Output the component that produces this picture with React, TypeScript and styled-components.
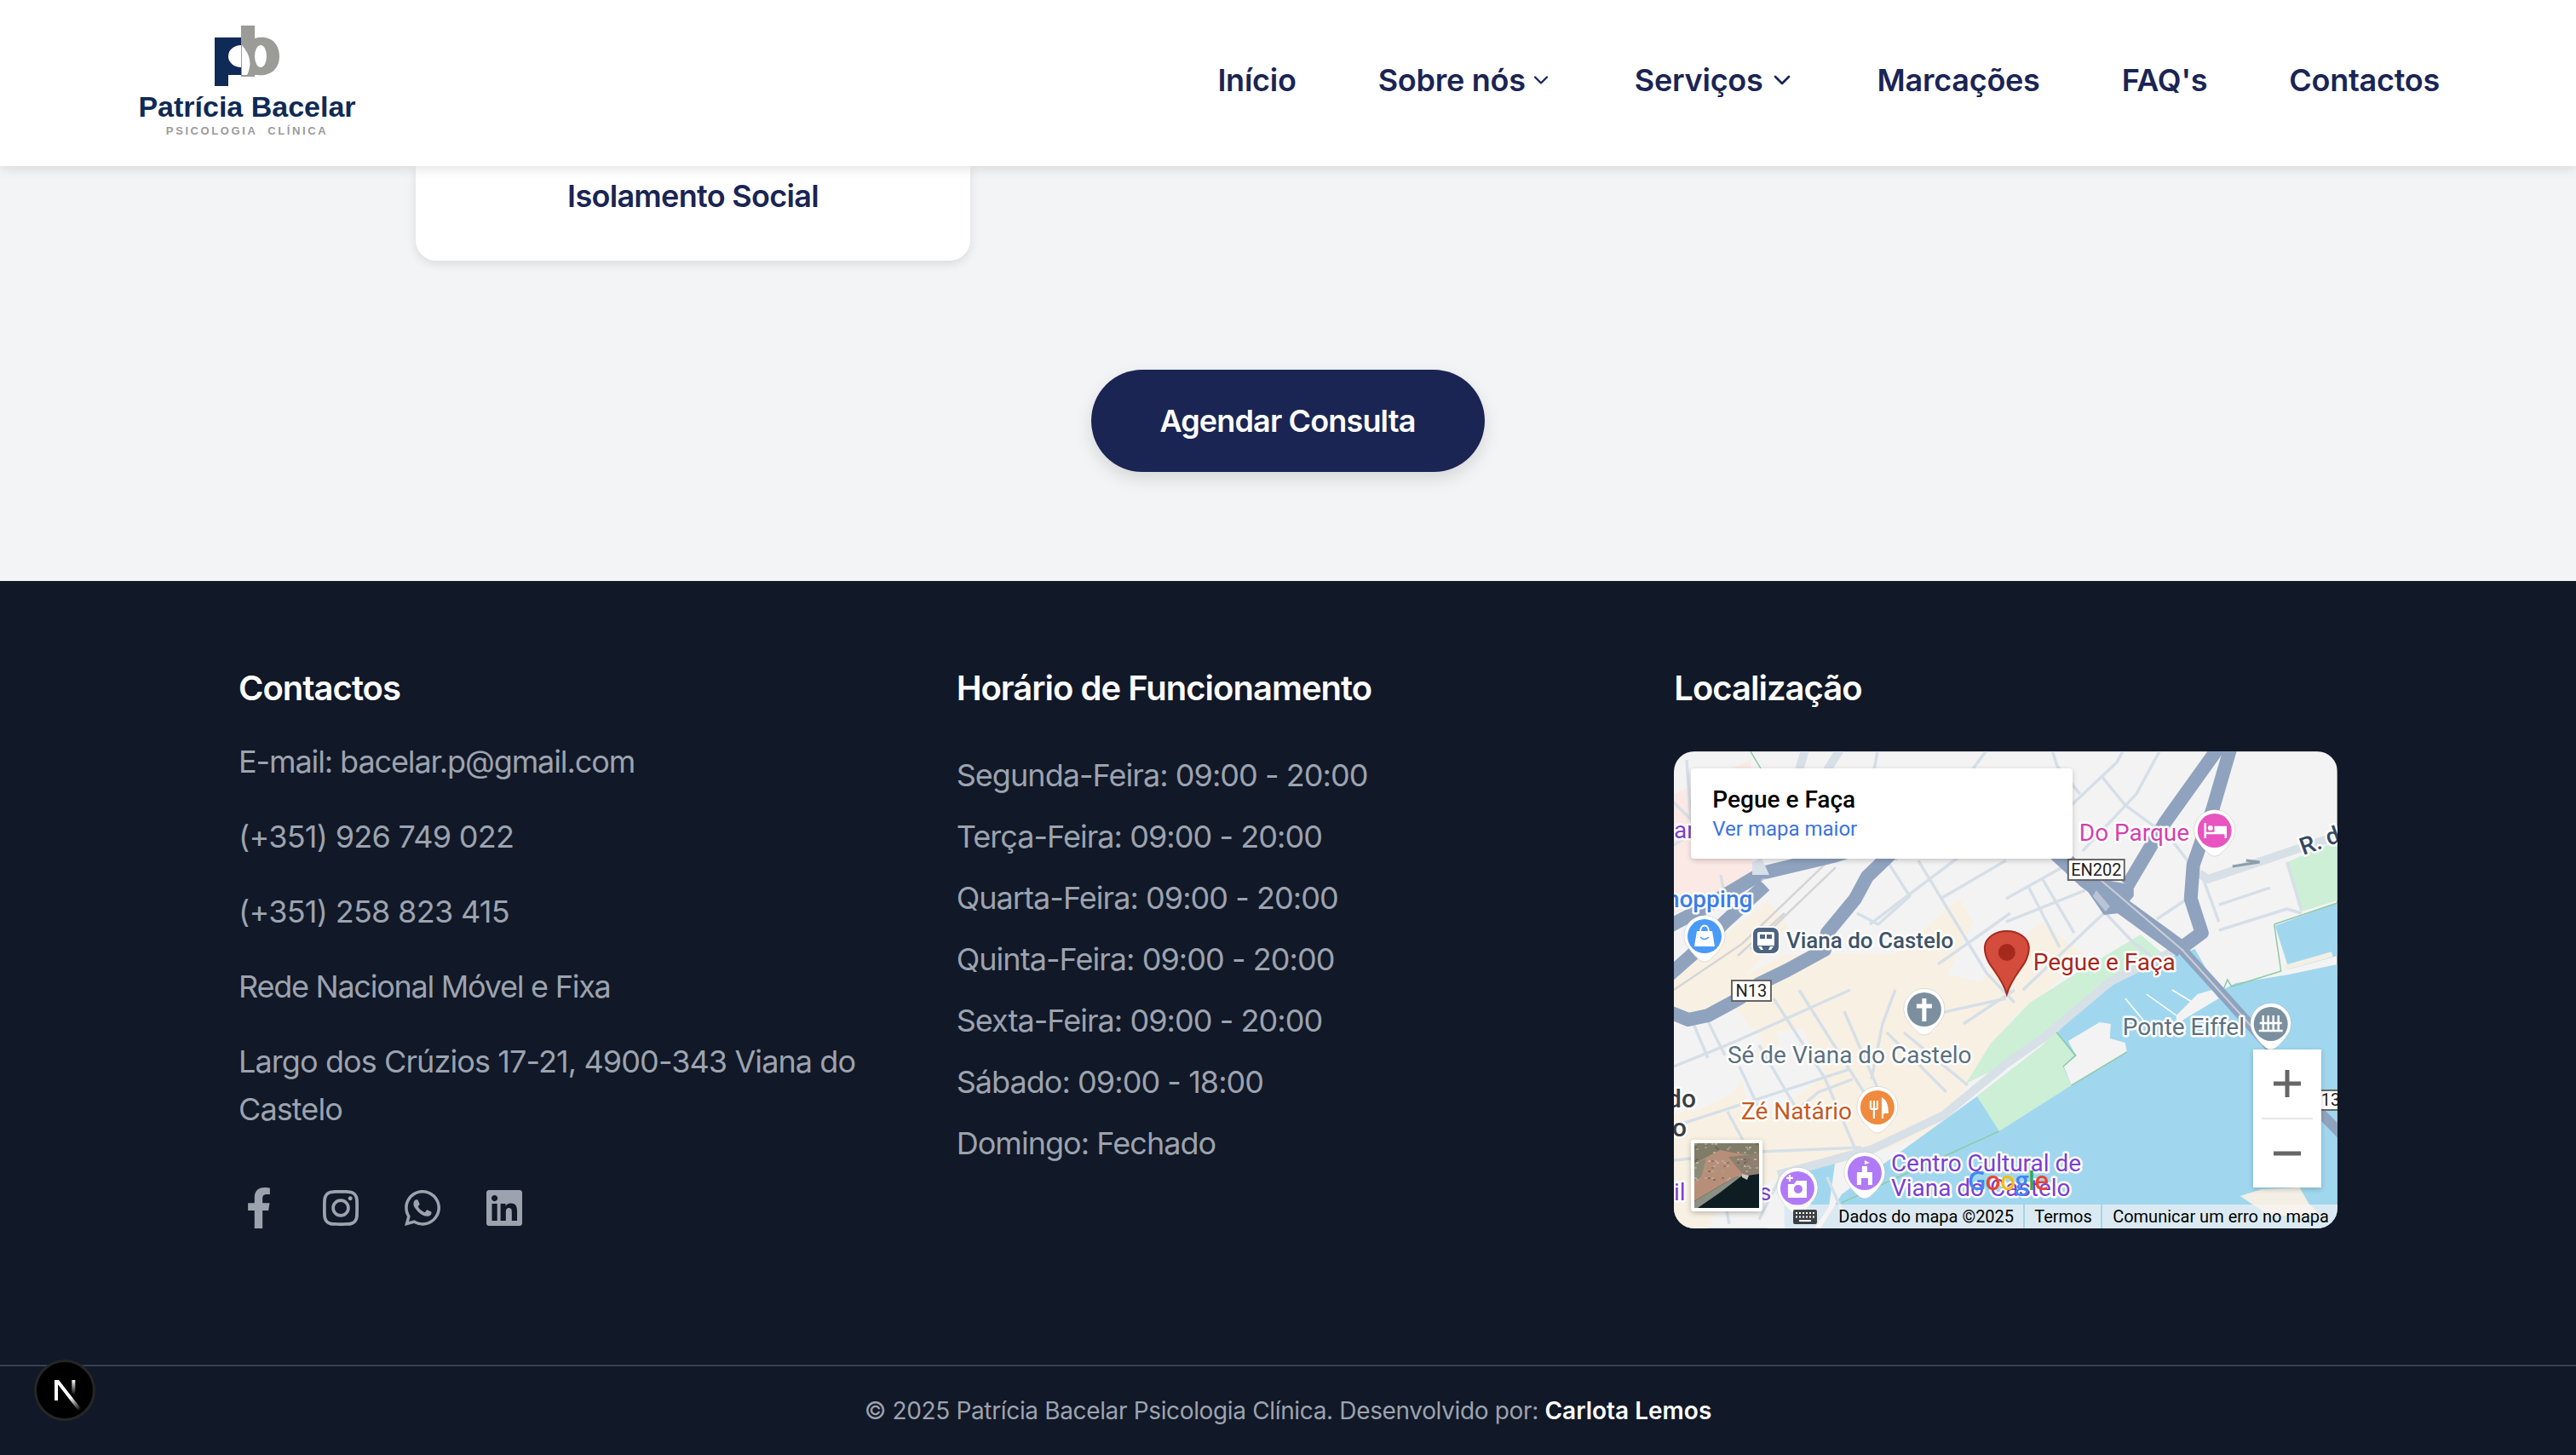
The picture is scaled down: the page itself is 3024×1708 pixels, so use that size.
import styled, { createGlobalStyle } from 'styled-components';
import { ChevronDown } from 'lucide-react';
import { FaFacebookF, FaInstagram, FaLinkedin, FaWhatsapp } from 'react-icons/fa';

const GlobalStyle = createGlobalStyle`
  * {
    box-sizing: border-box;
  }

  body {
    margin: 0;
    background: #111827;
    font-family: Inter, 'Noto Sans', sans-serif;
  }
`;

const navItems = [
  { label: 'Início' },
  { label: 'Sobre nós', chevron: 28, gap: 4 },
  { label: 'Serviços', chevron: 32, gap: 6 },
  { label: 'Marcações' },
  { label: "FAQ's" },
  { label: 'Contactos' },
];

const contacts = [
  { text: 'E-mail: bacelar.p@gmail.com', tracking: -1.1 },
  { text: '(+351) 926 749 022', tracking: -0.7 },
  { text: '(+351) 258 823 415', tracking: -0.7 },
  { text: 'Rede Nacional Móvel e Fixa', tracking: -1.25 },
  { text: 'Largo dos Crúzios 17-21, 4900-343 Viana do Castelo', tracking: -0.9 },
];

const schedule = [
  'Segunda-Feira: 09:00 - 20:00',
  'Terça-Feira: 09:00 - 20:00',
  'Quarta-Feira: 09:00 - 20:00',
  'Quinta-Feira: 09:00 - 20:00',
  'Sexta-Feira: 09:00 - 20:00',
  'Sábado: 09:00 - 18:00',
  'Domingo: Fechado',
];

const highways = [
  'M-5 205 L33 185 L103 143 L187 123 L260 100',
  'M-5 262 L20 240 L60 200 L107 157',
  'M255 120 L227 147 L213 173 L180 213 L177 233 L133 257 L100 273 L77 290 L40 310 L17 315 L-5 306',
  'M640 -5 L577 83 L533 157',
  'M654 -5 L633 67 L610 133 L607 173 L620 213 L597 230',
];

const thinHighways = ['M597 233 L637 277 L700 347', 'M755 420 L790 456'];

const mainStreets = [
  'M585 235 L513 270 L433 337 L390 367 L317 427 L233 467 L160 487 L122 497',
  'M617 143 L627 150 L737 113 L790 96',
  'M155 -5 L147 22',
  'M197 -5 L180 22',
];

const streets = [
  'M240 -5 L235 22',
  'M370 -5 L350 22',
  'M250 128 L277 170 L240 203 L215 190',
  'M287 128 L347 227 L367 260 L400 295',
  'M313 173 L390 128',
  'M467 63 L520 13 L530 -5',
  'M480 117 L543 50 L573 -5',
  'M503 30 L530 63 L567 90',
  'M443 -5 L450 17 L477 50',
  'M587 107 L610 137',
  'M720 130 L737 187',
  'M640 210 L720 185 L737 190',
  'M603 173 L567 197',
  'M390 173 L467 130',
  'M433 150 L470 213',
  'M417 160 L453 230',
  'M390 200 L483 163',
  'M410 280 L505 190',
  'M507 190 L540 225 L560 240',
  'M0 370 L67 343 L207 280',
  'M147 280 L223 400',
  'M10 437 L207 373',
  'M63 423 L83 460',
  'M117 290 L177 383 L213 467',
  'M23 320 L40 360',
  'M40 317 L60 357',
  'M77 370 L105 430',
  'M100 345 L150 430',
  'M0 480 L100 470 L220 465',
  'M140 425 L170 400 L210 385',
  'M260 280 L245 320 L232 385',
  'M270 330 L345 392',
  'M250 330 L320 400',
  'M300 310 L390 290',
  'M340 320 L400 280',
  'M0 110 L75 60',
  'M0 60 L20 80 L15 10',
  'M55 145 L62 180',
  'M200 305 L250 420',
  'M180 500 L200 545',
  'M125 500 L100 550',
  'M215 100 L270 60',
  'M310 250 L360 215 L395 190',
  'M300 125 L390 70',
  'M50 475 L65 555',
  'M560 245 L617 215',
  'M230 203 L300 150 L360 105',
  'M260 128 L285 90 L340 45',
  'M620 145 L640 200',
  'M640 180 L700 160',
];

const rails = ['M80 226 L180 130', 'M90 232 L190 136', 'M0 280 L80 226', 'M75 240 L130 190'];

// mottled rooftops on the satellite preview
const thumbSpeckles = Array.from({ length: 110 }, (_, i) => ({
  id: i,
  x: (i * i * 7 + i * 13) % 76,
  y: (i * i * 3 + i * 29) % 44,
  dark: i % 3 === 0,
}));

const Pin = ({ x, y, color }: { x: number; y: number; color: string }) => (
  <g>
    <path
      d={`M${x - 24} ${y} A24 24 0 1 1 ${x + 22} ${y + 9} Q${x + 16} ${y + 20} ${x + 6} ${y + 28} Q${x} ${y + 32} ${x - 6} ${y + 28} Q${x - 16} ${y + 20} ${x - 22} ${y + 9} Q${x - 24} ${y + 4} ${x - 24} ${y} Z`}
      fill="#fff"
      stroke="#000"
      strokeOpacity=".12"
      strokeWidth="1"
    />
    <circle cx={x} cy={y} r="20" fill={color} />
  </g>
);

const Shield = ({ x, y, w, h, label, textX }: { x: number; y: number; w: number; h: number; label: string; textX?: number }) => (
  <g>
    <rect x={x} y={y} width={w} height={h} fill="#fff" stroke="#666" strokeWidth="2" />
    <ShieldText x={textX ?? x + w / 2} y={y + h - 5} $anchor={textX ? 'start' : 'middle'}>
      {label}
    </ShieldText>
  </g>
);

const GoogleMapArt = () => (
  <MapSvg viewBox="0 0 779 560">
    <rect width="779" height="560" fill="#f4f3f4" />

    <polygon points="0,50 90,10 93,145 0,190" fill="#fbe9e6" />
    <polygon
      points="0,262 110,175 135,205 85,262 130,238 178,237 260,238 335,172 352,200 322,262 360,270 392,240 430,200 483,238 440,280 400,310 345,392 300,450 225,475 170,490 60,520 40,560 0,560"
      fill="#f8f1e3"
    />
    <polygon points="0,310 70,300 105,340 70,400 30,420 0,425" fill="#f4f3f4" />
    <polygon points="75,372 150,330 180,380 120,420 90,420" fill="#f4f3f4" />
    <polygon points="120,330 150,325 160,345 130,355" fill="#f4f3f4" />
    <polygon points="170,490 215,478 200,540 150,560 110,560 110,510" fill="#f4f3f4" />

    <path
      d="M779 250 L722 262 L660 272 L640 282 L612 232 L517 262 L440 340 L356 405 L197 520 L172 560 L779 560 Z"
      fill="#a0d7ee"
    />
    <polygon points="130,494 190,478 182,535 165,560 130,560" fill="#a0d7ee" />
    <polygon points="705,205 779,178 779,240 722,256" fill="#a0d7ee" />

    <polygon points="548,215 577,240 513,270 433,337 390,367 343,390 372,343 418,295 470,262" fill="#ccefd6" />
    <polygon points="356,405 433,345 447,327 470,357 457,370 467,392 382,446" fill="#ccefd6" />
    <polygon points="463,340 500,318 513,320 512,337 530,342 532,353 467,392 458,370 472,357" fill="#f4f3f4" />
    <polygon points="720,130 779,105 779,175 737,188" fill="#ccefd6" />
    <polygon points="665,522 690,514 735,512 745,530 760,545 700,545 680,532" fill="#f3efe4" />
    <polygon points="617,222 640,212 703,195 722,255 650,270 630,262" fill="#f4f3f4" />
    <path d="M705 203 L779 178 M467 392 L532 353 M382 446 L197 530 M705 203 L713 258 L655 276 L650 268 L646 278" fill="none" stroke="#8ccaa6" strokeWidth="1.5" />
    <path d="M447 327 L472 357 L457 370" fill="none" stroke="#8ccaa6" strokeWidth="1.5" />
    <path d="M90 0 L102 20" fill="none" stroke="#8ccaa6" strokeWidth="1.5" />
    <path d="M717 254 L773 238" stroke="#f3efe4" strokeWidth="6" fill="none" />
    <path d="M530 290 L555 320 M555 285 L590 310 M585 280 L610 295" stroke="#fff" strokeWidth="1.5" fill="none" />
    <polygon points="590,310 615,285 632,280 640,290 590,320" fill="#f4f3f4" />

    {streets.map((d) => (
      <Road key={d} d={d} $color="#d6dfe7" $width={3.5} />
    ))}
    {rails.map((d) => (
      <Road key={d} d={d} $color="#d5d5d6" $width={2.5} />
    ))}
    {mainStreets.map((d) => (
      <Road key={d} d={d} $color="#d8e0e7" $width={10} />
    ))}
    {highways.map((d) => (
      <Road key={d} d={d} $color="#8fa3bf" $width={16} />
    ))}
    {thinHighways.map((d) => (
      <Road key={d} d={d} $color="#8fa3bf" $width={12} />
    ))}
    <Road d="M440 110 L483 150 L597 233" $color="#8fa3bf" $width={20} />
    <polygon points="483,160 490,148 540,157 540,170 523,190 505,192" fill="#8fa3bf" />
    <polygon points="496,163 512,182 507,188 492,170" fill="#b9c5d6" />
    <Road d="M500 150 L597 233 L700 347" $color="#c9ced6" $width={2} />
    <ellipse cx="106" cy="152" rx="4" ry="3" fill="#f4f3f4" opacity=".4" />
    <polygon points="92,130 103,125 112,145 92,145" fill="#d8e0e7" />
    <path d="M688 130 L672 128 M688 130 L656 135" stroke="#8b9fa8" strokeWidth="3" fill="none" />

    <Shield x={463} y={127} w={66} h={24} label="EN202" />
    <Shield x={68} y={269} w={46} h={24} label="N13" />
    <Shield x={750} y={398} w={50} h={23} label="13" textX={760} />

    <Pin x={36} y={217} color="#4a9bf8" />
    <path d="M27 211 H45 L48 229 H24 Z" fill="#fff" />
    <path d="M31 212 C31 202 41 202 41 212" fill="none" stroke="#fff" strokeWidth="2" />
    <path d="M31 218 Q36 223 41 218" fill="none" stroke="#4a9bf8" strokeWidth="1.6" />

    <rect x="92" y="206" width="32" height="32" rx="8" fill="#4d6580" stroke="#fff" strokeWidth="2" />
    <path d="M100 212 H116 Q118 212 118 214 V228 H98 V214 Q98 212 100 212 Z" fill="#fff" />
    <rect x="101" y="215" width="6" height="5" fill="#4d6580" />
    <rect x="109" y="215" width="6" height="5" fill="#4d6580" />
    <path d="M99 229 L102 233 H105 L103 229 M117 229 L114 233 H111 L113 229" fill="#fff" />

    <Pin x={635} y={93} color="#e854c0" />
    <path d="M624 84 V102 M624 96 H648 V102 M648 96 V89 H636 V96" stroke="#fff" strokeWidth="2.5" fill="none" />
    <circle cx="630" cy="90" r="3" fill="#fff" />
    <rect x="636" y="89" width="12" height="7" fill="#fff" />

    <Pin x={294} y={303} color="#7c8f9e" />
    <path d="M294 290 V317 M285 299 H303" stroke="#fff" strokeWidth="5" fill="none" />

    <Pin x={701} y={320} color="#7b909f" />
    <path d="M692 310 V328 M698 310 V328 M704 310 V328 M710 310 V328 M688 319 H714 M687 328 H715" stroke="#fff" strokeWidth="2.5" fill="none" />

    <Pin x={239} y={418} color="#f08a3c" />
    <path d="M231 410 V420 M235 410 V420 M239 410 V420 M231 420 H239 M235 420 V431" stroke="#fff" strokeWidth="2.2" fill="none" />
    <path d="M245 431 V408 Q251 412 251 424 H247" fill="#fff" stroke="#fff" strokeWidth="2" />

    <Pin x={224} y={495} color="#b07af7" />
    <path d="M215 509 V494 H233 V509 H228 V501 H220 V509 Z" fill="#fff" />
    <rect x="221" y="487" width="6" height="7" fill="#fff" />
    <path d="M224 487 V480 L230 483 L224 485" fill="#fff" />

    <Pin x={145} y={513} color="#b07af7" />
    <path d="M134 508 H141 L144 504 H156 V524 H134 Z" fill="#fff" />
    <circle cx="146" cy="514" r="5" fill="#b07af7" />
    <path d="M136 497 V505 M132 501 H140" stroke="#fff" strokeWidth="2.2" />

    <path
      d="M391 285 C386 268 376 258 370 248 C366 241 365 236 365 230 C366 218 378 211 391 211 C404 211 416 218 417 230 C417 236 416 241 412 248 C406 258 396 268 391 285 Z"
      fill="#d44c3c"
      stroke="#a5291d"
      strokeWidth="2"
    />
    <circle cx="391" cy="236" r="10" fill="#a5291d" />

    <MapLabel x={422} y={257} fill="#a5291d">Pegue e Faça</MapLabel>
    <MapLabel x={476} y={105} fill="#d43fb0">Do Parque</MapLabel>
    <MapLabel x={132} y={231} fill="#3f5468" $weight={500} $size={26}>Viana do Castelo</MapLabel>
    <MapLabel x={-26} y={183} fill="#3b7de8" $weight={500}>Shopping</MapLabel>
    <MapLabel x={0} y={102} fill="#7c3fd0">ar</MapLabel>
    <MapLabel x={63} y={366} fill="#5c7080">Sé de Viana do Castelo</MapLabel>
    <MapLabel x={79} y={432} fill="#c55a1c">Zé Natário</MapLabel>
    <MapLabel x={-8} y={418} fill="#3c4043" $weight={500} $size={30}>do</MapLabel>
    <MapLabel x={-2} y={452} fill="#3c4043" $weight={500} $size={30}>o</MapLabel>
    <MapLabel x={255} y={493} fill="#7c3fd0">Centro Cultural de</MapLabel>
    <MapLabel x={255} y={522} fill="#7c3fd0">Viana do Castelo</MapLabel>
    <MapLabel x={0} y={527} fill="#7c3fd0">il</MapLabel>
    <MapLabel x={100} y={527} fill="#7c3fd0">s</MapLabel>
    <MapLabel x={527} y={333} fill="#5c7080">Ponte Eiffel</MapLabel>
    <MapLabel x={739} y={122} fill="#34495e" $weight={500} transform="rotate(-20 739 122)">R. d</MapLabel>

    <GoogleWord x={345} y={515}>
      <tspan fill="#4285f4">G</tspan>
      <tspan fill="#ea4335">o</tspan>
      <tspan fill="#fbbc05">o</tspan>
      <tspan fill="#4285f4">g</tspan>
      <tspan fill="#34a853">l</tspan>
      <tspan fill="#ea4335">e</tspan>
    </GoogleWord>
  </MapSvg>
);

const SatelliteThumb = () => (
  <ThumbSvg viewBox="0 0 76 76" preserveAspectRatio="none">
    <rect width="76" height="76" fill="#b78f79" />
    <path d="M0 0 H76 V14 L50 12 L30 8 L0 24 Z" fill="#7f7c68" />
    <path d="M0 24 L14 18 L8 40 L0 44 Z" fill="#8a8a78" />
    <path d="M40 16 L76 12 V36 L58 38 Z" fill="#8f7f70" />
    {thumbSpeckles.map((s) => (
      <rect key={s.id} x={s.x} y={s.y} width="3" height="2" fill={s.dark ? '#5f5a4c' : '#cbb7a6'} opacity=".55" />
    ))}
    <path d="M0 76 V68 L30 50 L48 40 L76 36 V76 Z" fill="#0e1d22" />
    <path d="M0 68 L30 50 L48 40 L56 38 L30 58 L4 76 H0 Z" fill="#8b8f84" />
    <path d="M56 36 L64 38 L62 43 L56 40 Z" fill="#c9c9c2" />
  </ThumbSvg>
);

const NextLogo = () => (
  <svg width="60" height="60" viewBox="0 0 180 180" fill="none">
    <defs>
      <linearGradient id="nxa" x1="109" y1="116" x2="144" y2="160" gradientUnits="userSpaceOnUse">
        <stop stopColor="#fff" />
        <stop offset="1" stopColor="#fff" stopOpacity="0" />
      </linearGradient>
      <linearGradient id="nxb" x1="121" y1="54" x2="120.8" y2="106" gradientUnits="userSpaceOnUse">
        <stop stopColor="#fff" />
        <stop offset="1" stopColor="#fff" stopOpacity="0" />
      </linearGradient>
    </defs>
    <path d="M149.5 157.5L69.1 54H54V126H66V69.4L139.3 164C143.6 162.1 146.7 160 149.5 157.5Z" fill="url(#nxa)" />
    <rect x="115" y="54" width="12" height="72" fill="url(#nxb)" />
  </svg>
);

export default function App() {
  return (
    <>
      <GlobalStyle />
      <Header>
        <Logo>
          <svg width="76" height="71" viewBox="0 0 76 71">
            <path d="M0 14 H31 V58 H16 V71 H0 Z" fill="#0f2a56" />
            <ellipse cx="31" cy="36" rx="15" ry="13" fill="#fff" />
            <rect x="31" y="20" width="16" height="40" fill="#9b9b98" />
            <path d="M31 0 H47 V15 C64 10 76 20 76 36 C76 52 64 60 50 58 H31 Z" fill="#9b9b98" />
            <ellipse cx="54" cy="36" rx="7" ry="13" fill="#fff" />
            <path d="M32 23 Q47 40 38 58 H32 Z" fill="#fff" />
          </svg>
          <LogoName>Patrícia Bacelar</LogoName>
          <LogoTag>PSICOLOGIA CLÍNICA</LogoTag>
        </Logo>
        <Nav>
          {navItems.map((item) => (
            <NavLink key={item.label} $gap={item.gap}>
              {item.label}
              {item.chevron && <ChevronDown size={item.chevron} strokeWidth={2} />}
            </NavLink>
          ))}
        </Nav>
      </Header>

      <Main>
        <CardRow>
          <TopicCard>Isolamento Social</TopicCard>
        </CardRow>
        <BookButton>Agendar Consulta</BookButton>
      </Main>

      <Footer>
        <FooterMain>
          <Column>
            <FooterTitle>Contactos</FooterTitle>
            <ContactList>
              {contacts.map((line) => (
                <FooterText key={line.text} $tracking={line.tracking}>{line.text}</FooterText>
              ))}
            </ContactList>
            <Socials>
              <SocialLink><FaFacebookF size={48} /></SocialLink>
              <SocialLink><FaInstagram size={48} /></SocialLink>
              <SocialLink><FaWhatsapp size={48} /></SocialLink>
              <SocialLink><FaLinkedin size={48} /></SocialLink>
            </Socials>
          </Column>
          <Column>
            <FooterTitle>Horário de Funcionamento</FooterTitle>
            <ScheduleList>
              {schedule.map((line) => (
                <FooterText key={line}>{line}</FooterText>
              ))}
            </ScheduleList>
          </Column>
          <Column>
            <FooterTitle>Localização</FooterTitle>
            <MapFrame>
              <GoogleMapArt />
              <PlaceCard>
                <PlaceName>Pegue e Faça</PlaceName>
                <PlaceLink>Ver mapa maior</PlaceLink>
              </PlaceCard>
              <ZoomControl>
                <ZoomButton>
                  <svg width="34" height="34" viewBox="0 0 34 34">
                    <path d="M17 1 V33 M1 17 H33" stroke="#666" strokeWidth="5" />
                  </svg>
                </ZoomButton>
                <ZoomDivider />
                <ZoomButton>
                  <svg width="34" height="34" viewBox="0 0 34 34">
                    <path d="M1 17 H33" stroke="#666" strokeWidth="5" />
                  </svg>
                </ZoomButton>
              </ZoomControl>
              <Thumb>
                <SatelliteThumb />
              </Thumb>
              <Attribution>
                <svg width="28" height="17" viewBox="0 0 28 17">
                  <rect width="28" height="17" rx="2" fill="#3c4043" />
                  <path d="M3 4 H25 M3 8.5 H25" stroke="#fff" strokeWidth="2" strokeDasharray="2 2" />
                  <path d="M7 13 H21" stroke="#fff" strokeWidth="2" />
                </svg>
                <AttributionText $width={219}>Dados do mapa ©2025</AttributionText>
                <AttributionText $width={91} $pad={11}>Termos</AttributionText>
                <AttributionText $width={276} $pad={12} $last>Comunicar um erro no mapa</AttributionText>
              </Attribution>
            </MapFrame>
          </Column>
        </FooterMain>
        <FooterBottom>
          © 2025 Patrícia Bacelar Psicologia Clínica. Desenvolvido por: <strong>Carlota Lemos</strong>
        </FooterBottom>
      </Footer>

      <DevBadge>
        <NextLogo />
      </DevBadge>
    </>
  );
}

const Header = styled.header`
  position: relative;
  z-index: 10;
  height: 195px;
  padding: 0 160px 0 163px;
  display: flex;
  align-items: center;
  justify-content: space-between;
  background: #fff;
  box-shadow: 0 4px 12px rgba(0, 0, 0, 0.1);
`;

const Logo = styled.div`
  width: 254px;
  display: flex;
  flex-direction: column;
  align-items: center;
  margin-top: -3px;
`;

const LogoName = styled.div`
  margin-top: 5px;
  font-family: 'Liberation Sans', Arial, sans-serif;
  font-weight: 700;
  font-size: 34px;
  line-height: 38px;
  white-space: nowrap;
  color: #0f2a56;
`;

const LogoTag = styled.div`
  margin-top: 2px;
  font-family: 'Liberation Sans', Arial, sans-serif;
  font-weight: 700;
  font-size: 13px;
  line-height: 16px;
  letter-spacing: 2.6px;
  word-spacing: 6px;
  white-space: nowrap;
  color: #9b9b9b;
`;

const Nav = styled.nav`
  display: flex;
  align-items: center;
  gap: 96px;
  margin-top: -8px;
`;

const NavLink = styled.a<{ $gap?: number }>`
  display: flex;
  align-items: center;
  gap: ${(p) => p.$gap ?? 0}px;
  font-weight: 600;
  font-size: 36px;
  line-height: 56px;
  letter-spacing: -0.25px;
  color: #1a2554;
`;

const Main = styled.main`
  display: flex;
  flex-direction: column;
  align-items: center;
  padding-bottom: 128px;
  background: #f3f4f6;
`;

const CardRow = styled.div`
  align-self: stretch;
  padding-left: 488px;
`;

const TopicCard = styled.div`
  width: 651px;
  padding-bottom: 40px;
  font-weight: 600;
  font-size: 36px;
  line-height: 71px;
  letter-spacing: -0.7px;
  text-align: center;
  color: #1a2554;
  background: #fff;
  border-radius: 0 0 24px 24px;
  box-shadow: 0 4px 12px rgba(0, 0, 0, 0.1);
`;

const BookButton = styled.button`
  width: 462px;
  height: 120px;
  margin-top: 128px;
  margin-left: -1px;
  border: 0;
  border-radius: 60px;
  font-family: inherit;
  font-weight: 600;
  font-size: 36px;
  letter-spacing: -0.85px;
  color: #fff;
  background: #1a2554;
  box-shadow: 0 8px 20px rgba(0, 0, 0, 0.12);
`;

const Footer = styled.footer`
  background: #111827;
`;

const FooterMain = styled.div`
  display: grid;
  grid-template-columns: repeat(3, 1fr);
  gap: 64px;
  padding: 96px 280px 160px;
`;

const Column = styled.div`
  min-width: 0;
`;

const FooterTitle = styled.h3`
  margin: 0;
  font-weight: 600;
  font-size: 40px;
  line-height: 60px;
  letter-spacing: -1px;
  color: #fff;
`;

const ContactList = styled.div`
  display: flex;
  flex-direction: column;
  gap: 32px;
  margin-top: 28px;
`;

const ScheduleList = styled.div`
  display: flex;
  flex-direction: column;
  gap: 16px;
  margin-top: 44px;
`;

const FooterText = styled.p<{ $tracking?: number }>`
  margin: 0;
  font-size: 36px;
  line-height: 56px;
  letter-spacing: ${(p) => p.$tracking ?? -0.95}px;
  color: #9ca3af;
`;

const Socials = styled.div`
  display: flex;
  gap: 48px;
  margin-top: 64px;
`;

const SocialLink = styled.a`
  display: flex;
  justify-content: center;
  width: 48px;
  height: 48px;
  color: #9ca3af;
`;

const MapFrame = styled.div`
  position: relative;
  height: 560px;
  margin-top: 44px;
  overflow: hidden;
  border-radius: 24px;
  font-family: Roboto, Arial, sans-serif;
`;

const MapSvg = styled.svg`
  display: block;
  width: 100%;
  height: 100%;
`;

const Road = styled.path<{ $color: string; $width: number }>`
  fill: none;
  stroke: ${(p) => p.$color};
  stroke-width: ${(p) => p.$width}px;
  stroke-linejoin: round;
  stroke-linecap: butt;
`;

const MapLabel = styled.text<{ $weight?: number; $size?: number }>`
  font-family: Roboto, Arial, sans-serif;
  font-size: ${(p) => p.$size ?? 28}px;
  font-weight: ${(p) => p.$weight ?? 400};
  paint-order: stroke;
  stroke: #fff;
  stroke-width: 5px;
  stroke-linejoin: round;
`;

const ShieldText = styled.text<{ $anchor: string }>`
  font-family: Roboto, Arial, sans-serif;
  font-size: 20px;
  fill: #222;
  text-anchor: ${(p) => p.$anchor};
`;

const GoogleWord = styled.text`
  font-family: 'Open Sans', Arial, sans-serif;
  font-size: 30px;
  font-weight: 600;
  letter-spacing: -1px;
`;

const PlaceCard = styled.div`
  position: absolute;
  top: 20px;
  left: 20px;
  width: 448px;
  height: 106px;
  padding: 20px 25px;
  background: #fff;
  border-radius: 4px;
  box-shadow: 0 2px 6px rgba(0, 0, 0, 0.2);
`;

const PlaceName = styled.div`
  font-weight: 500;
  font-size: 28px;
  line-height: 34px;
  color: #000;
`;

const PlaceLink = styled.a`
  display: block;
  margin-top: 2px;
  font-size: 24px;
  line-height: 30px;
  color: #3b74e0;
`;

const ZoomControl = styled.div`
  position: absolute;
  top: 350px;
  left: 680px;
  width: 80px;
  height: 162px;
  background: #fff;
  display: flex;
  flex-direction: column;
  box-shadow: 0 2px 6px rgba(0, 0, 0, 0.2);
`;

const ZoomButton = styled.div`
  flex: 1;
  display: flex;
  align-items: center;
  justify-content: center;
`;

const ZoomDivider = styled.div`
  height: 2px;
  margin: 0 10px;
  background: #e6e6e6;
`;

const Thumb = styled.div`
  position: absolute;
  top: 456px;
  left: 20px;
  width: 84px;
  height: 84px;
  border: 4px solid #fff;
  border-radius: 4px;
  overflow: hidden;
  box-shadow: 0 2px 6px rgba(0, 0, 0, 0.25);
`;

const ThumbSvg = styled.svg`
  display: block;
  width: 100%;
  height: 100%;
`;

const Attribution = styled.div`
  position: absolute;
  right: 0;
  bottom: 0;
  left: 130px;
  height: 28px;
  padding-left: 10px;
  display: flex;
  align-items: center;
  background: rgba(250, 245, 245, 0.65);

  svg {
    margin-right: 25px;
  }
`;

const AttributionText = styled.span<{ $width: number; $pad?: number; $last?: boolean }>`
  width: ${(p) => p.$width}px;
  padding-left: ${(p) => p.$pad ?? 0}px;
  font-size: 20px;
  line-height: 28px;
  white-space: nowrap;
  color: #000;
  border-right: ${(p) => (p.$last ? 'none' : '2px solid #a0d7ee')};
`;

const FooterBottom = styled.div`
  padding: 32px 0 31px;
  border-top: 2px solid #374151;
  font-size: 28px;
  line-height: 40px;
  letter-spacing: -0.35px;
  text-align: center;
  color: #9ca3af;

  strong {
    font-weight: 600;
    letter-spacing: 0;
    color: #fff;
  }
`;

const DevBadge = styled.div`
  position: fixed;
  bottom: 40px;
  left: 40px;
  width: 72px;
  height: 72px;
  display: flex;
  align-items: center;
  justify-content: center;
  overflow: hidden;
  background: #000;
  border: 3px solid #262626;
  border-radius: 50%;
`;
